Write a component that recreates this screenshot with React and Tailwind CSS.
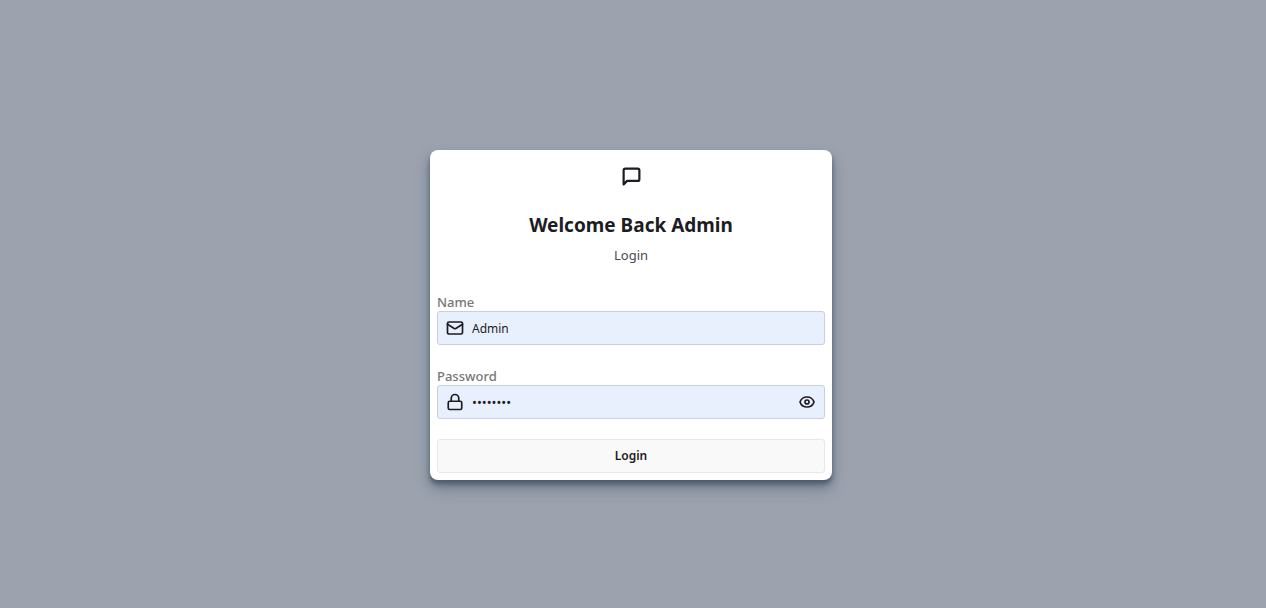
import React, { useState } from 'react'
import { Mail, Lock, EyeOff } from 'lucide-react'

const inputBox =
  'flex items-center gap-2 h-[34px] pl-2 pr-[9px] rounded-[3px] border border-[#c9cfdc] bg-[#e8f0fe] text-[#1d1c22]'
const inputText = 'flex-1 min-w-0 pt-0.5 bg-transparent outline-none'
const labelText = 'block text-[13px] leading-[18px] font-medium text-[#77767a]'

function ChatIcon() {
  return (
    <svg
      className="w-[21px] h-[21px]"
      viewBox="0 0 24 24"
      fill="none"
      stroke="currentColor"
      strokeWidth="2.5"
      strokeLinecap="round"
      strokeLinejoin="round"
      aria-hidden="true"
    >
      <path d="M21 15a2 2 0 0 1-2 2H7l-4 4V5a2 2 0 0 1 2-2h14a2 2 0 0 1 2 2z" />
    </svg>
  )
}

function EyeIcon() {
  return (
    <svg
      className="w-4 h-4"
      viewBox="0 0 24 24"
      fill="none"
      stroke="currentColor"
      strokeWidth="2.5"
      strokeLinecap="round"
      strokeLinejoin="round"
      aria-hidden="true"
    >
      <path d="M1.5 12C3 7.500 7 4.500 12 4.500S21 7.500 22.500 12C21 16.500 17 19.500 12 19.500S3 16.500 1.500 12Z" />
      <circle cx="12" cy="12" r="3" />
    </svg>
  )
}

export default function App() {
  const [form, setForm] = useState({ name: 'Admin', password: 'admin123' })
  const [showPassword, setShowPassword] = useState(false)

  const handleSubmit = (e) => {
    e.preventDefault()
  }

  return (
    <main className="min-h-screen flex items-center justify-center bg-[#9ca3af] pt-[22px] pr-1 font-['Noto_Sans','Open_Sans',sans-serif] text-[#1d1c22]">
      <div className="w-full max-w-[402px] rounded-lg bg-white p-[7px] shadow-[0_4px_4px_#475569cc,0_8px_14px_#47556999]">
        <div className="flex flex-col items-center text-center pt-[9px]">
          <ChatIcon />
          <h1 className="mt-6 text-[19px] leading-7 font-bold">Welcome Back Admin</h1>
          <p className="mt-1 text-[13px] leading-6 text-[#4a4950]">Login</p>
        </div>

        <form onSubmit={handleSubmit} className="mt-[26px]">
          <label htmlFor="name" className={labelText}>
            Name
          </label>
          <div className={inputBox}>
            <Mail size={18} strokeWidth={2.25} />
            <input
              id="name"
              type="text"
              value={form.name}
              onChange={e => setForm({ ...form, name: e.target.value })}
              className={`${inputText} text-xs`}
            />
          </div>

          <label htmlFor="password" className={`${labelText} mt-[22px]`}>
            Password
          </label>
          <div className={inputBox}>
            <Lock size={18} strokeWidth={2.25} />
            <input
              id="password"
              type={showPassword ? 'text' : 'password'}
              value={form.password}
              onChange={e => setForm({ ...form, password: e.target.value })}
              className={`${inputText} text-[13px]`}
            />
            <button
              type="button"
              aria-label={showPassword ? 'Hide password' : 'Show password'}
              onClick={() => setShowPassword(!showPassword)}
            >
              {showPassword ? <EyeOff size={16} /> : <EyeIcon />}
            </button>
          </div>

          <button
            type="submit"
            className="mt-5 w-full h-[34px] rounded-[3px] border border-[#e8e8e8] bg-[#f9f9f9] text-xs font-semibold"
          >
            Login
          </button>
        </form>
      </div>
    </main>
  )
}
